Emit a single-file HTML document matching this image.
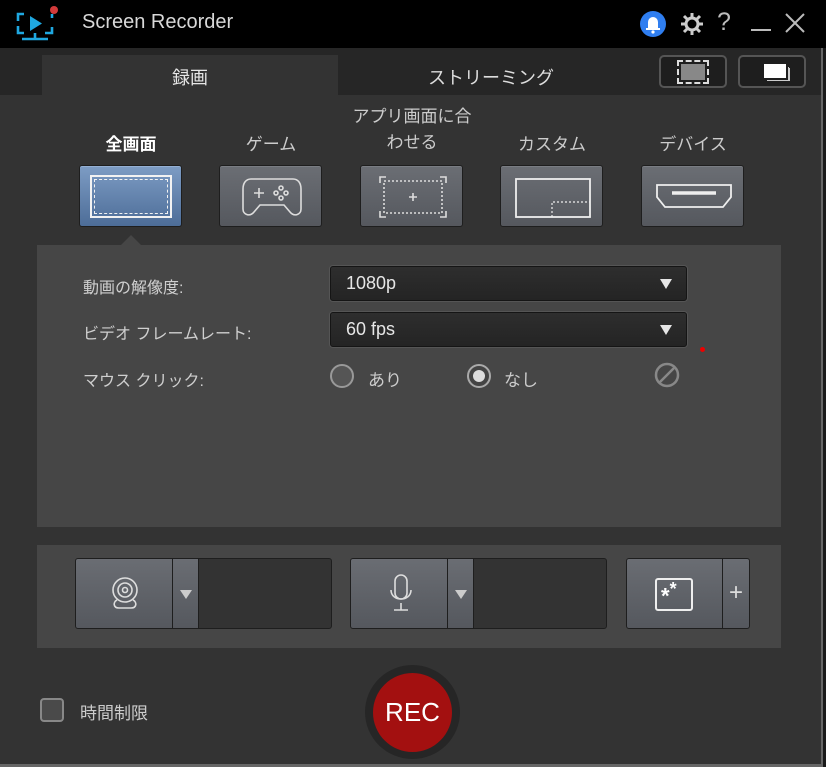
<!DOCTYPE html>
<html><head><meta charset="utf-8"><style>
*{box-sizing:border-box;margin:0;padding:0}
body{width:826px;height:767px;background:#333;font-family:"Liberation Sans","Noto Sans CJK JP",sans-serif;position:relative;overflow:hidden;color:#ddd}
.a{position:absolute}
.title{left:0;top:0;width:826px;height:48px;background:#000}
.tabbar{left:0;top:48px;width:826px;height:47px;background:#262626}
.mode{width:103px;height:62px;border-radius:3px;background:linear-gradient(#6b6e74,#55585e);border:1px solid #1e1e1e;box-shadow:inset 0 1px 0 #7a7d83}
.mode.sel{background:linear-gradient(#7d9cc4,#4d6d98);box-shadow:inset 0 1px 0 #95b0d4}
.lbl{font-size:17px;color:#ccc;text-align:center;width:140px}
.dd{left:330px;width:357px;height:35px;background:linear-gradient(#2e2e2e,#242424);border:1px solid #151515;border-radius:3px;box-shadow:0 0 0 1px #555;font-size:18px;color:#e6e6e6;padding:6px 0 0 15px}
.dd:after{content:"";position:absolute;right:14px;top:12px;border-left:6px solid transparent;border-right:6px solid transparent;border-top:10px solid #e6e6e6}
.fl{left:83px;font-size:16px;color:#cfcfcf}
.btn{background:linear-gradient(#6a6d73,#55585e);border:1px solid #1e1e1e;border-radius:3px 0 0 3px}
.arr{background:linear-gradient(#6a6d73,#55585e);border:1px solid #1e1e1e}
.dark{background:#333;border:1px solid #1e1e1e;border-radius:0 3px 3px 0}
</style></head><body>
<div class="a title"></div>
<svg class="a" style="left:14px;top:4px" width="50" height="42" viewBox="0 0 50 42" fill="none" stroke="#1fa8e0" stroke-width="2.6">
<path d="M10 10H4V17M4 22V29H10M31 29H38V23M38 14V10"/>
<path d="M16 12L28 19.5L16 27Z" fill="#1fa8e0" stroke="none"/>
<path d="M21 29V35M8 35H34"/>
<circle cx="40" cy="6" r="4" fill="#d23a3a" stroke="none"/></svg>
<div class="a" style="left:82px;top:11px;font-size:20px;color:#d8d8d8">Screen Recorder</div>
<svg class="a" style="left:639px;top:10px" width="28" height="28"><circle cx="14" cy="14" r="13" fill="#2f7ef0"/><path d="M9 18V12a5 5 0 0 1 10 0v6z" fill="#fff"/><rect x="7" y="18" width="14" height="2" fill="#fff"/><circle cx="14" cy="22" r="1.6" fill="#fff"/></svg>
<svg class="a" style="left:679px;top:11px" width="26" height="26" viewBox="0 0 26 26"><g stroke="#ccc" stroke-width="3"><path d="M13 2v22M2 13h22M5 5l16 16M21 5L5 21"/></g><circle cx="13" cy="13" r="7.5" fill="#ccc"/><circle cx="13" cy="13" r="4.5" fill="#000"/></svg>
<div class="a" style="left:717px;top:8px;font-size:25px;color:#bbb">?</div>
<div class="a" style="left:751px;top:29px;width:20px;height:2px;background:#bbb"></div>
<svg class="a" style="left:784px;top:12px" width="22" height="22"><path d="M2 2L20 20M20 2L2 20" stroke="#bbb" stroke-width="2"/></svg>
<div class="a tabbar"></div>
<div class="a" style="left:42px;top:55px;width:296px;height:40px;background:#333;text-align:center;padding-top:9px;font-size:18px;color:#e6e6e6">録画</div>
<div class="a" style="left:338px;top:55px;width:306px;height:40px;text-align:center;padding-top:9px;font-size:18px;color:#ddd">ストリーミング</div>
<div class="a" style="left:659px;top:55px;width:68px;height:33px;border:2px solid #555;border-radius:5px;background:#1e1e1e"><div class="a" style="left:20px;top:7px;width:24px;height:16px;background:#888;outline:2px dashed #ddd;outline-offset:2px"></div></div>
<div class="a" style="left:738px;top:55px;width:68px;height:33px;border:2px solid #555;border-radius:5px;background:#1e1e1e"><div class="a" style="left:28px;top:11px;width:22px;height:13px;border:1px solid #ccc;border-top:0;border-left:0"></div><div class="a" style="left:24px;top:7px;width:22px;height:14px;background:#fff;box-shadow:2px 2px 0 #1e1e1e,3px 3px 0 #ccc"></div></div>
<div class="a lbl" style="left:61px;top:130px;color:#fff;font-weight:bold">全画面</div>
<div class="a lbl" style="left:201px;top:130px">ゲーム</div>
<div class="a lbl" style="left:342px;top:104px;line-height:26px">アプリ画面に合<br>わせる</div>
<div class="a lbl" style="left:482px;top:130px">カスタム</div>
<div class="a lbl" style="left:623px;top:130px">デバイス</div>
<div class="a mode sel" style="left:79px;top:165px"><div class="a" style="left:10px;top:9px;width:82px;height:43px;border:2px solid #f2f2f2"><div class="a" style="left:2px;top:2px;right:2px;bottom:2px;border:1px dashed #f2f2f2"></div></div></div>
<div class="a mode" style="left:219px;top:165px"><svg class="a" style="left:21px;top:10px" width="62" height="42" viewBox="0 0 62 42" fill="none" stroke="#ddd" stroke-width="1.6"><path d="M10 3h42c5 0 8 4 8 10v20c0 6-7 8-11 3l-6-7H19l-6 7c-4 5-11 3-11-3V13C2 7 5 3 10 3z"/><path d="M13 17h10M18 12v10"/><circle cx="40" cy="12" r="2"/><circle cx="40" cy="22" r="2"/><circle cx="35" cy="17" r="2"/><circle cx="45" cy="17" r="2"/></svg></div>
<div class="a mode" style="left:360px;top:165px"><svg class="a" style="left:17px;top:9px" width="70" height="44" fill="none" stroke="#ddd" stroke-width="1.6"><path d="M2 8V2h6M62 2h6v6M68 36v6h-6M8 42H2v-6"/><rect x="6" y="6" width="58" height="32" stroke-dasharray="2 2"/><path d="M31 22h8M35 18v8"/></svg></div>
<div class="a mode" style="left:500px;top:165px"><svg class="a" style="left:14px;top:12px" width="76" height="40" fill="none" stroke="#eee" stroke-width="1.8"><rect x="1" y="1" width="74" height="38"/><path d="M37 39V24H75" stroke-dasharray="2 2" stroke-width="1.2"/></svg></div>
<div class="a mode" style="left:641px;top:165px"><svg class="a" style="left:13px;top:17px" width="78" height="28" fill="none" stroke="#eee" stroke-width="1.8"><path d="M2 2h74v12l-8 10H10L2 14z"/><path d="M17 10h44" stroke-width="3.5"/></svg></div>
<div class="a" style="left:37px;top:245px;width:744px;height:282px;background:#464646"></div>
<div class="a" style="left:121px;top:235px;border-left:10px solid transparent;border-right:10px solid transparent;border-bottom:10px solid #464646"></div>
<div class="a fl" style="top:274px">動画の解像度:</div>
<div class="a fl" style="top:320px">ビデオ フレームレート:</div>
<div class="a fl" style="top:367px">マウス クリック:</div>
<div class="a dd" style="top:266px">1080p</div>
<div class="a dd" style="top:312px">60 fps</div>
<div class="a" style="left:330px;top:364px;width:24px;height:24px;border-radius:50%;border:2px solid #999;background:#555"></div>
<div class="a" style="left:368px;top:366px;font-size:17px;color:#ccc">あり</div>
<div class="a" style="left:467px;top:364px;width:24px;height:24px;border-radius:50%;border:2px solid #aaa;background:#444"><div class="a" style="left:4px;top:4px;width:12px;height:12px;border-radius:50%;background:#ddd"></div></div>
<div class="a" style="left:504px;top:366px;font-size:17px;color:#ccc">なし</div>
<svg class="a" style="left:654px;top:362px" width="26" height="26" fill="none" stroke="#888" stroke-width="2.5"><circle cx="13" cy="13" r="11"/><path d="M6 20L20 6"/></svg>
<div class="a" style="left:700px;top:347px;width:5px;height:5px;border-radius:50%;background:#e00"></div>
<div class="a" style="left:37px;top:545px;width:744px;height:103px;background:#464646"></div>
<div class="a btn" style="left:75px;top:558px;width:98px;height:71px"><svg class="a" style="left:33px;top:16px" width="32" height="38" fill="none" stroke="#ddd" stroke-width="1.6"><circle cx="16" cy="15" r="12"/><circle cx="16" cy="15" r="7"/><circle cx="16" cy="15" r="2.5"/><path d="M8 25c-4 2-4 8 2 8h12c6 0 6-6 2-8"/></svg></div>
<div class="a arr" style="left:172px;top:558px;width:27px;height:71px"><div class="a" style="left:7px;top:31px;border-left:6px solid transparent;border-right:6px solid transparent;border-top:9px solid #ccc"></div></div>
<div class="a dark" style="left:198px;top:558px;width:134px;height:71px"></div>
<div class="a btn" style="left:350px;top:558px;width:98px;height:71px"><svg class="a" style="left:37px;top:14px" width="26" height="40" fill="none" stroke="#ddd" stroke-width="1.6"><rect x="7" y="2" width="12" height="24" rx="6"/><path d="M3 17c0 12 20 12 20 0M13 30v7M6 37h14"/></svg></div>
<div class="a arr" style="left:447px;top:558px;width:27px;height:71px"><div class="a" style="left:7px;top:31px;border-left:6px solid transparent;border-right:6px solid transparent;border-top:9px solid #ccc"></div></div>
<div class="a dark" style="left:473px;top:558px;width:134px;height:71px"></div>
<div class="a btn" style="left:626px;top:558px;width:97px;height:71px"><div class="a" style="left:28px;top:19px;width:38px;height:33px;border:2px solid #eee;border-radius:3px;color:#fff;font-size:22px;font-weight:bold;line-height:18px;padding-left:4px">*<sup style="font-size:18px">*</sup></div></div>
<div class="a arr" style="left:722px;top:558px;width:28px;height:71px;border-radius:0 3px 3px 0;color:#ddd;font-size:24px;text-align:center;padding-top:20px">+</div>
<div class="a" style="left:40px;top:698px;width:24px;height:24px;border:2px solid #888;border-radius:4px;background:#4a4a4a"></div>
<div class="a" style="left:80px;top:699px;font-size:17px;color:#ccc">時間制限</div>
<div class="a" style="left:365px;top:665px;width:95px;height:94px;border-radius:50%;background:#262626"></div>
<div class="a" style="left:373px;top:673px;width:79px;height:79px;border-radius:50%;background:#a31010;color:#fff;font-size:26px;text-align:center;line-height:79px">REC</div>
<div class="a" style="left:0;top:764px;width:826px;height:3px;background:#666"></div>
<div class="a" style="left:821px;top:48px;width:2px;height:719px;background:#666"></div>
<div class="a" style="left:823px;top:48px;width:3px;height:719px;background:#1a1a1a"></div>
</body></html>
